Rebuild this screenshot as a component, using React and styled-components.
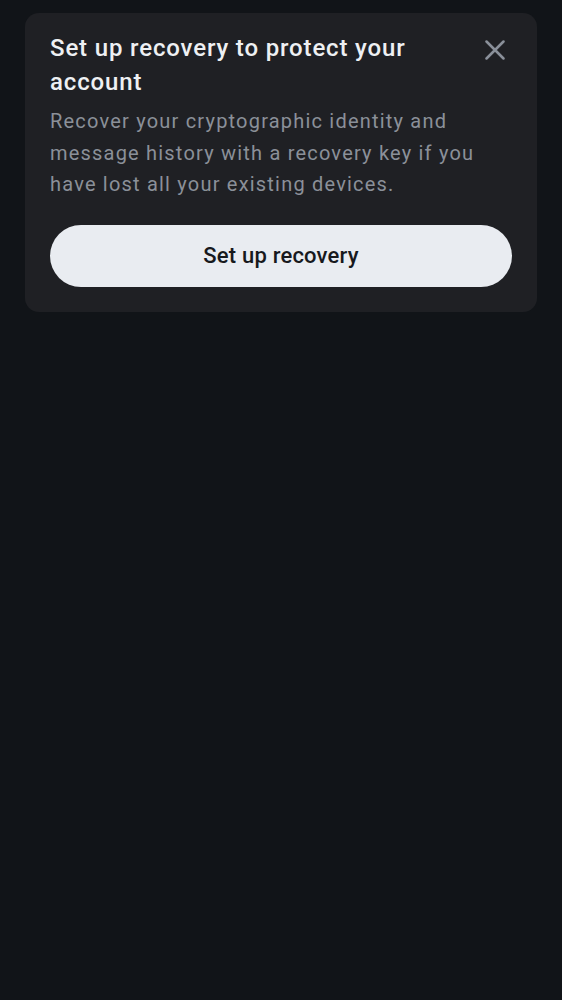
import React from "react";
import styled, { createGlobalStyle } from "styled-components";

const GlobalStyle = createGlobalStyle`
  html, body {
    margin: 0;
    padding: 0;
    background: #111418;
    font-family: Roboto, "Noto Sans", sans-serif;
  }
`;

const Page = styled.div`
  min-height: 1000px;
  padding: 13px 25px;
  box-sizing: border-box;
`;

const Card = styled.div`
  background: #1f2024;
  border-radius: 14px;
  padding: 18px 25px 25px 25px;
  display: flex;
  flex-direction: column;
`;

const Header = styled.div`
  display: flex;
  align-items: flex-start;
  justify-content: space-between;
  gap: 16px;
`;

const Title = styled.h2`
  margin: 0;
  color: #eef0f3;
  font-size: 24px;
  font-weight: 500;
  line-height: 34px;
  letter-spacing: 0.85px;
`;

const CloseButton = styled.button`
  border: none;
  background: none;
  padding: 0;
  margin-top: 8px;
  margin-right: 6px;
  width: 22px;
  height: 22px;
  display: flex;
  align-items: center;
  justify-content: center;
  color: #8a909a;
  cursor: pointer;
  flex-shrink: 0;
`;

const Body = styled.p`
  margin: 7px 0 0 0;
  color: #8b9099;
  font-size: 20px;
  line-height: 31.5px;
  letter-spacing: 1.2px;
`;

const Action = styled.button`
  margin-top: 24px;
  height: 62px;
  border: none;
  border-radius: 31px;
  background: #e9ecf1;
  color: #17191d;
  font-family: Roboto, "Noto Sans", sans-serif;
  font-size: 22px;
  font-weight: 500;
  letter-spacing: 0.2px;
  cursor: pointer;
`;

function App() {
  return (
    <Page>
      <GlobalStyle />
      <Card>
        <Header>
          <Title>Set up recovery to protect your account</Title>
          <CloseButton aria-label="Close">
            <svg width="20" height="20" viewBox="0 0 20 20" fill="none">
              <path d="M1.5 1.5L18.5 18.5M18.5 1.5L1.5 18.5" stroke="currentColor" strokeWidth="2.5" strokeLinecap="round" />
            </svg>
          </CloseButton>
        </Header>
        <Body>
          Recover your cryptographic identity and message history with a recovery key if you have lost all your existing devices.
        </Body>
        <Action>Set up recovery</Action>
      </Card>
    </Page>
  );
}

export default App;
